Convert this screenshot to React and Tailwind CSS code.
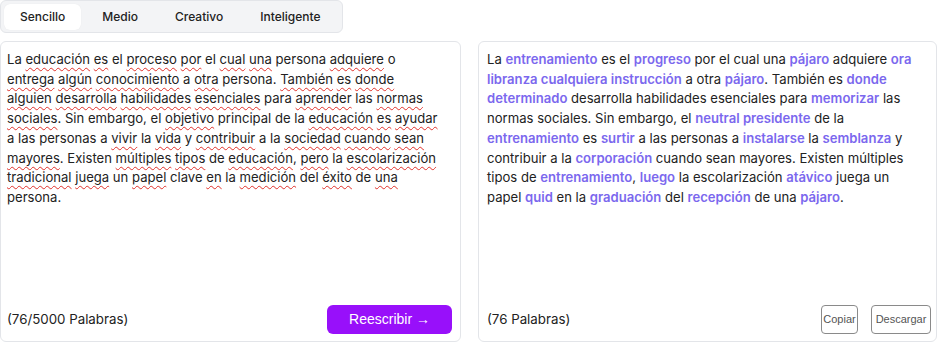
import React from "react";

const tabs = ["Sencillo", "Medio", "Creativo", "Inteligente"];

// [palabra] = marked word (spellcheck underline on the left, rewrite highlight on the right)
const sourceLines = [
  "La [educación] [es] el [proceso] [por] el [cual] [una] persona [adquiere] o",
  "[entrega] [algún] [conocimiento] a [otra] persona. [También] [es] [donde]",
  "[alguien] [desarrolla] [habilidades] [esenciales] para [aprender] las [normas]",
  "[sociales]. Sin embargo, el [objetivo] principal de la [educación] [es] [ayudar]",
  "a las personas a [vivir] la [vida] y [contribuir] a la [sociedad] [cuando] [sean]",
  "[mayores]. Existen [múltiples] [tipos] de [educación], [pero] la [escolarización]",
  "[tradicional] [juega] un [papel] clave [en] la [medición] del [éxito] de [una]",
  "persona.",
];

const resultLines = [
  "La [entrenamiento] es el [progreso] por el cual una [pájaro] adquiere [ora]",
  "[libranza cualquiera instrucción] a otra [pájaro]. También es [donde]",
  "[determinado] desarrolla habilidades esenciales para [memorizar] las",
  "normas sociales. Sin embargo, el [neutral presidente] de la",
  "[entrenamiento] es [surtir] a las personas a [instalarse] la [semblanza] y",
  "contribuir a la [corporación] cuando sean mayores. Existen múltiples",
  "tipos de [entrenamiento], [luego] la escolarización [atávico] juega un",
  "papel [quid] en la [graduación] del [recepción] de una [pájaro].",
];

const renderMarked = (text, markClass) =>
  text.split(/(\[[^\]]+\])/).map((part, i) =>
    part.startsWith("[") ? (
      <span key={i} className={markClass}>
        {part.slice(1, -1)}
      </span>
    ) : (
      <React.Fragment key={i}>{part}</React.Fragment>
    )
  );

const Lines = ({ lines, markClass }) => (
  <div className="flex-1 text-[13.1px] leading-[19.7px]">
    {lines.map((line, i) => (
      <div key={i} className="whitespace-nowrap">
        {renderMarked(line, markClass)}
      </div>
    ))}
  </div>
);

export default function App() {
  return (
    <div className="w-[940px] h-[344px] bg-white font-['Inter',sans-serif] text-[#222] overflow-hidden">
      {/* Mode tabs */}
      <div className="inline-flex items-center gap-[5px] p-[3px] pr-[6px] h-[33px] bg-[#f3f4f6] border border-[#e3e5e9] rounded-md">
        {tabs.map((tab, i) => (
          <button
            key={tab}
            className={`h-[26px] px-4 rounded-md text-[12px] font-medium text-[#222] ${
              i === 0 ? "bg-white shadow-[0_0_1px_rgba(0,0,0,0.08)]" : ""
            }`}
          >
            {tab}
          </button>
        ))}
      </div>

      <div className="flex gap-[17px] mt-2">
        {/* Input */}
        <div className="w-[461px] h-[301px] flex flex-col border border-[#e3e5e9] rounded-md pl-[6px] pr-[8px] pt-[8px] pb-[7px]">
          <Lines
            lines={sourceLines}
            markClass="underline decoration-wavy decoration-[#e0302a] decoration-1 underline-offset-[3px]"
          />
          <div className="flex items-center justify-between">
            <span className="text-[13.3px]">(76/5000 Palabras)</span>
            <button className="w-[125px] h-[29px] rounded-md bg-[#9810fa] text-white text-[14px] font-['Liberation_Sans',Arial,sans-serif]">
              Reescribir →
            </button>
          </div>
        </div>

        {/* Output */}
        <div className="w-[459px] h-[301px] flex flex-col border border-[#e3e5e9] rounded-md pl-[8px] pr-[5px] pt-[8px] pb-[7px]">
          <Lines lines={resultLines} markClass="font-semibold text-[#7b68ee]" />
          <div className="flex items-center justify-between">
            <span className="text-[13.3px]">(76 Palabras)</span>
            <div className="flex gap-[13px] font-['Liberation_Sans',Arial,sans-serif] text-[11px] text-[#555]">
              <button className="w-[37px] h-[29px] border border-[#8a8a8a] rounded-[4px]">Copiar</button>
              <button className="w-[60px] h-[29px] border border-[#8a8a8a] rounded-[4px]">Descargar</button>
            </div>
          </div>
        </div>
      </div>
    </div>
  );
}
